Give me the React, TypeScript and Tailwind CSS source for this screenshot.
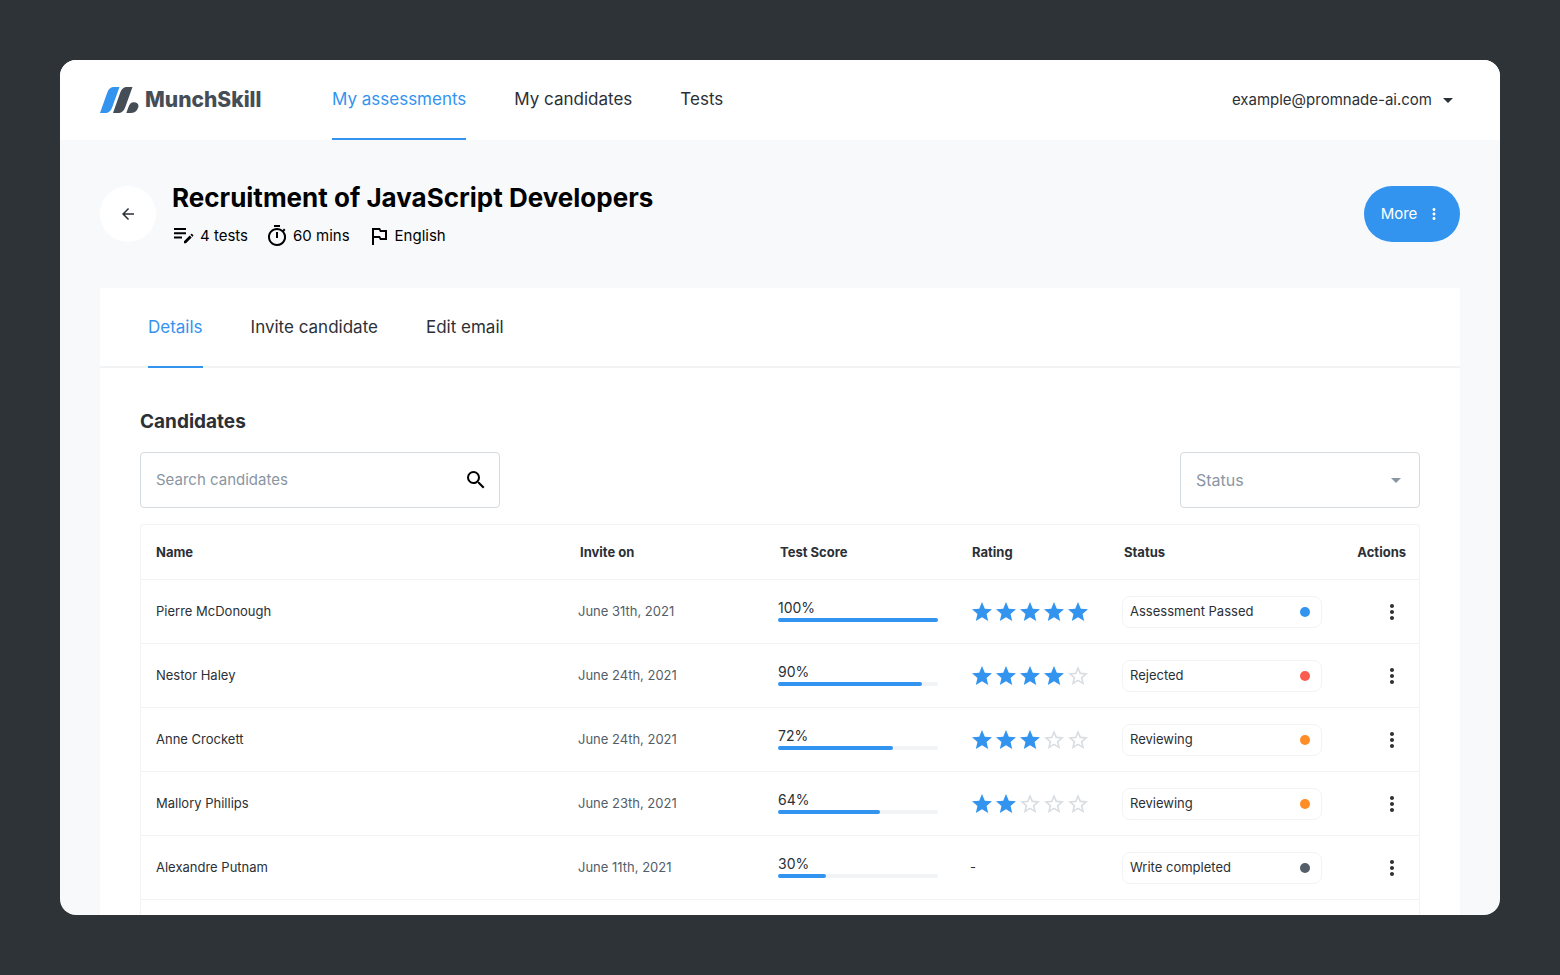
import {
  MdArrowBack,
  MdArrowDropDown,
  MdMoreVert,
  MdOutlinedFlag,
  MdOutlineTimer,
  MdSearch,
  MdStar,
  MdStarBorder,
} from "react-icons/md";

const navLinks = ["My assessments", "My candidates", "Tests"];
const tabs = ["Details", "Invite candidate", "Edit email"];

const candidates = [
  { name: "Pierre McDonough", invited: "June 31th, 2021", score: 100, rating: 5, status: "Assessment Passed", dot: "bg-[#3394f0]" },
  { name: "Nestor Haley", invited: "June 24th, 2021", score: 90, rating: 4, status: "Rejected", dot: "bg-[#fc5c50]" },
  { name: "Anne Crockett", invited: "June 24th, 2021", score: 72, rating: 3, status: "Reviewing", dot: "bg-[#fd8d24]" },
  { name: "Mallory Phillips", invited: "June 23th, 2021", score: 64, rating: 2, status: "Reviewing", dot: "bg-[#fd8d24]" },
  { name: "Alexandre Putnam", invited: "June 11th, 2021", score: 30, rating: 0, status: "Write completed", dot: "bg-[#535e69]" },
];

function Logo() {
  return (
    <a href="#" className="flex w-[232px] items-center gap-1.5">
      <svg width="39" height="26" viewBox="0 0 39 26" aria-hidden="true">
        <path d="M14.500 0H19.500L12.300 20C10.800 24.200 8.600 26 4.800 26H0L7 6.200C8.600 1.800 10.700 0 14.500 0Z" fill="#3394f0" />
        <path d="M27.500 0H32.500L25.300 20C23.800 24.200 21.600 26 17.800 26H13L20 6.200C21.600 1.800 23.700 0 27.500 0Z" fill="#454e56" />
        <path d="M33.800 15.200c3.500 0 5.400 2.200 4.400 5.200C37 24 34.300 26 30.500 26h-4.200l2-5.600c1.200-3.400 2.700-5.200 5.500-5.200Z" fill="#454e56" />
      </svg>
      <span className="text-[21px] font-extrabold text-[#454e56]">MunchSkill</span>
    </a>
  );
}

function TestsIcon() {
  return (
    <svg width="24" height="24" viewBox="0 0 24 24" fill="currentColor" aria-hidden="true">
      <path d="M2 4h12v2H2zM2 8.300h12v2H2zM2 12.600h8v2H2z" />
      <path d="M12 17.200l5.700-5.700 2 2L14 19.200h-2zM18.400 10.800l.8-.8c.3-.3.7-.3 1 0l1 1c.3.3.3.700 0 1l-.8.8z" />
    </svg>
  );
}

function Rating({ value }: { value: number }) {
  if (!value) return <span>-</span>;

  return (
    <div className="flex" role="img" aria-label={`${value} of 5`}>
      {[1, 2, 3, 4, 5].map((n) =>
        n <= value ? (
          <MdStar key={n} size={24} className="text-[#3394f0]" />
        ) : (
          <MdStarBorder key={n} size={24} className="text-[#d8dde2]" />
        )
      )}
    </div>
  );
}

function Score({ value }: { value: number }) {
  return (
    <div className="w-40 pb-1">
      <div className="text-sm leading-5">{value}%</div>
      <div className="h-1 rounded-full bg-[#f1f3f5]">
        <div className="h-1 rounded-full bg-[#3394f0]" style={{ width: `${value}%` }} />
      </div>
    </div>
  );
}

export default function App() {
  return (
    <div className="h-screen bg-[#2e3338] p-15 font-['Inter',sans-serif] text-[#2b3036]">
      <div className="flex h-full flex-col overflow-hidden rounded-2xl bg-[#f8f9fb]">
        {/* Top bar */}
        <header className="flex h-20 shrink-0 items-center bg-white px-10">
          <Logo />
          <nav className="flex h-full gap-12">
            {navLinks.map((label, i) => (
              <a
                key={label}
                href="#"
                className={`flex h-full items-center border-b-2 pt-0.5 text-[17px] ${
                  i === 0 ? "border-[#3394f0] text-[#3394f0]" : "border-transparent"
                }`}
              >
                {label}
              </a>
            ))}
          </nav>
          <button className="ml-auto flex items-center gap-1 text-[15px]">
            example@promnade-ai.com
            <MdArrowDropDown size={24} />
          </button>
        </header>

        {/* Assessment heading */}
        <section className="flex shrink-0 items-center gap-4 p-10">
          <button aria-label="Back" className="flex size-14 items-center justify-center rounded-full bg-white">
            <MdArrowBack size={18} />
          </button>
          <div className="text-black">
            <h1 className="text-[26px] leading-9 font-bold">Recruitment of JavaScript Developers</h1>
            <div className="mt-2 flex h-6 gap-[17px] text-[15px]">
              <span className="flex items-center gap-1">
                <TestsIcon /> 4 tests
              </span>
              <span className="flex items-center gap-1">
                <MdOutlineTimer size={24} /> 60 mins
              </span>
              <span className="flex items-center gap-1">
                <MdOutlinedFlag size={24} /> English
              </span>
            </div>
          </div>
          <button className="ml-auto flex h-14 w-24 items-center justify-center gap-2 rounded-full bg-[#3394f0] text-[15px] text-white">
            More
            <MdMoreVert size={18} />
          </button>
        </section>

        <main className="mx-10 flex grow flex-col bg-white">
          <div className="flex h-20 shrink-0 gap-12 border-b-2 border-[#f1f3f5] px-12">
            {tabs.map((label, i) => (
              <button
                key={label}
                className={`-mb-0.5 h-20 border-b-2 pt-0.5 text-[17px] ${
                  i === 0 ? "border-[#3394f0] text-[#3394f0]" : "border-transparent"
                }`}
              >
                {label}
              </button>
            ))}
          </div>

          <div className="flex grow flex-col px-10 pt-10">
            <h2 className="text-[19px] leading-7 font-bold">Candidates</h2>

            <div className="mt-4 flex justify-between">
              <label className="flex h-14 w-90 items-center rounded border border-[#d5dade] pr-[11px] pl-[15px]">
                <input
                  type="search"
                  aria-label="Search candidates"
                  placeholder="Search candidates"
                  className="min-w-0 grow text-[15px] outline-none placeholder:text-[#8a96a3]"
                />
                <MdSearch size={24} className="text-black" />
              </label>
              <label className="flex h-14 w-60 items-center rounded border border-[#d5dade] pr-[11px] pl-[15px] text-[#8a96a3]">
                <select aria-label="Status" className="grow appearance-none text-base outline-none">
                  <option>Status</option>
                </select>
                <MdArrowDropDown size={24} />
              </label>
            </div>

            {/* Candidates table, its frame runs on to the bottom of the panel */}
            <div className="mt-4 grow rounded-t border border-b-0 border-[#f1f3f5]">
              <table className="w-full table-fixed text-left text-[13px]">
                <thead>
                  <tr className="h-[54px] border-b border-[#f1f3f5] *:pt-0.5">
                    <th className="pl-[15px] font-bold">Name</th>
                    <th className="w-50 pl-0.5 font-bold">Invite on</th>
                    <th className="w-48 pl-0.5 font-bold">Test Score</th>
                    <th className="w-38 pl-0.5 font-bold">Rating</th>
                    <th className="w-50 pl-0.5 font-bold">Status</th>
                    <th className="w-[97px] pr-[13px] text-right font-bold">Actions</th>
                  </tr>
                </thead>
                <tbody>
                  {candidates.map((c) => (
                    <tr key={c.name} className="h-16 border-b border-[#f1f3f5] *:pt-0.5">
                      <td className="pl-[15px]">{c.name}</td>
                      <td className="text-[#535e69]">{c.invited}</td>
                      <td>
                        <Score value={c.score} />
                      </td>
                      <td>
                        <Rating value={c.rating} />
                      </td>
                      <td>
                        <div className="flex h-8 items-center justify-between rounded-lg border border-[#f1f3f5] pr-[11px] pl-[7px]">
                          {c.status}
                          <span className={`size-2.5 rounded-full ${c.dot}`} />
                        </div>
                      </td>
                      <td className="pr-[15px]">
                        <button aria-label={`Actions for ${c.name}`} className="ml-auto block">
                          <MdMoreVert size={24} />
                        </button>
                      </td>
                    </tr>
                  ))}
                </tbody>
              </table>
            </div>
          </div>
        </main>
      </div>
    </div>
  );
}
